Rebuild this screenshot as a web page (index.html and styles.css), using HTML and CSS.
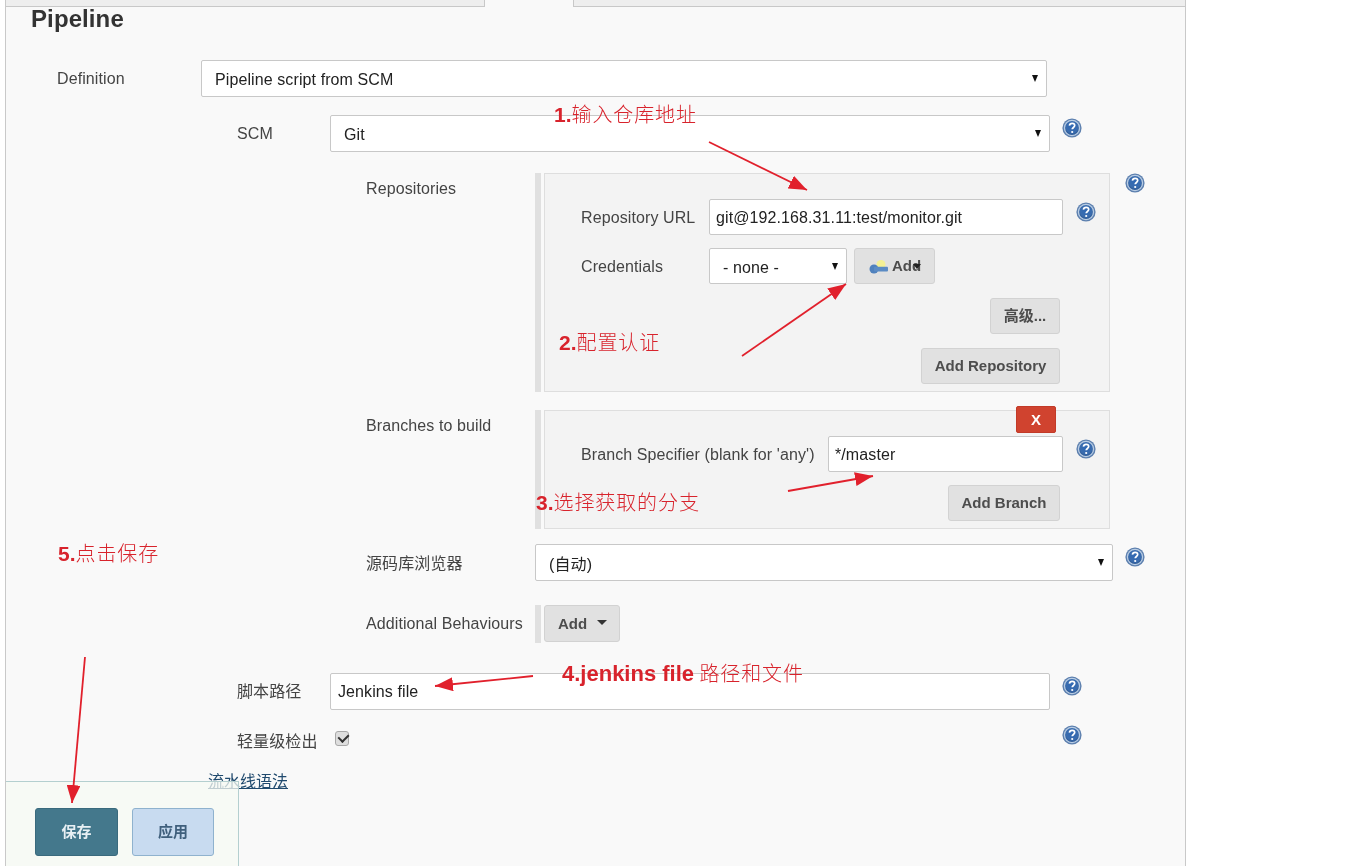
FILE: index.html
```html
<!DOCTYPE html>
<html lang="zh">
<head>
<meta charset="utf-8">
<title>Pipeline</title>
<link rel="stylesheet" href="styles.css">
</head>
<body>
<svg class="defs" width="0" height="0" aria-hidden="true">
  <defs>
    <radialGradient id="helpfill" cx="50%" cy="42%" r="60%">
      <stop offset="0" stop-color="#2f68b4"/>
      <stop offset="0.7" stop-color="#3a6cae"/>
      <stop offset="1" stop-color="#2a5590"/>
    </radialGradient>
    <symbol id="help" viewBox="0 0 20 20">
      <circle cx="10" cy="10" r="9.6" fill="#5c7fae"/>
      <circle cx="10" cy="10" r="8.2" fill="#b9cde4"/>
      <circle cx="10" cy="10" r="6.9" fill="url(#helpfill)"/>
      <path d="M7.4 7.7c.2-1.6 1.3-2.4 2.7-2.4 1.5 0 2.6.9 2.6 2.2 0 1.9-2.5 2-2.5 3.8" fill="none" stroke="#fff" stroke-width="1.7"/>
      <circle cx="10.2" cy="14" r="1.1" fill="#fff"/>
    </symbol>
    <marker id="head" viewBox="0 0 18 14" refX="18" refY="7" markerUnits="userSpaceOnUse" markerWidth="18" markerHeight="14" orient="auto">
      <path d="M0 0L18 7L0 14Z" fill="#e1202c"/>
    </marker>
  </defs>
</svg>

<div class="panel">
  <div class="tabs">
    <div class="tab tab-left"></div>
    <div class="tab-active"></div>
    <div class="tab tab-right"></div>
  </div>
  <h2 class="title">Pipeline</h2>

  <div class="row level0 row-def">
    <label class="label w-def">Definition</label>
    <div class="sel w-846"><select class="control"><option>Pipeline script from SCM</option></select></div>
  </div>

  <div class="row level1 row-scm">
    <label class="label w-l1">SCM</label>
    <div class="sel w-720"><select class="control"><option>Git</option></select></div>
    <svg class="help help-12"><use href="#help"/></svg>
  </div>

  <div class="row level2 row-repos">
    <label class="label label-block w-l2">Repositories</label>
    <div class="bar"></div>
    <div class="box box-repo">
      <div class="row">
        <label class="label w-url">Repository URL</label>
        <input class="control w-354" value="git@192.168.31.11:test/monitor.git">
        <svg class="help help-13"><use href="#help"/></svg>
      </div>
      <div class="row row-cred">
        <label class="label w-url">Credentials</label>
        <div class="sel w-138"><select class="control"><option>- none -</option></select></div>
        <button class="btn btn-key">
          <svg class="key" viewBox="0 0 20 14" width="20" height="14">
            <circle cx="12" cy="4.5" r="4.5" fill="#f4f095"/>
            <circle cx="5" cy="9" r="4.5" fill="#4f81bd"/>
            <rect x="5" y="6.8" width="14" height="4.6" rx="1" fill="#5b8bc4"/>
          </svg>
          <span>Add</span>
          <i class="caret caret-over"></i>
        </button>
      </div>
      <div class="actions actions-a"><button class="btn btn-adv">高级...</button></div>
      <div class="actions actions-a"><button class="btn btn-addrepo">Add Repository</button></div>
    </div>
    <svg class="help help-15 help-top"><use href="#help"/></svg>
  </div>

  <div class="row level2 row-branch">
    <label class="label label-block w-l2">Branches to build</label>
    <div class="bar"></div>
    <div class="box box-branch">
      <button class="btn-x">X</button>
      <div class="row">
        <label class="label w-spec">Branch Specifier (blank for 'any')</label>
        <input class="control w-235" value="*/master">
        <svg class="help help-13"><use href="#help"/></svg>
      </div>
      <div class="actions actions-b"><button class="btn btn-addbranch">Add Branch</button></div>
    </div>
  </div>

  <div class="row level2 row-browser">
    <label class="label label-browser w-l2">源码库浏览器</label>
    <div class="sel w-578"><select class="control control-cjk"><option>(自动)</option></select></div>
    <svg class="help help-12"><use href="#help"/></svg>
  </div>

  <div class="row level2 row-behave">
    <label class="label w-l2">Additional Behaviours</label>
    <div class="bar"></div>
    <button class="btn btn-addb">Add<i class="caret"></i></button>
  </div>

  <div class="row level1 row-script">
    <label class="label w-l1">脚本路径</label>
    <input class="control control-script w-720" value="Jenkins file">
    <svg class="help help-12"><use href="#help"/></svg>
  </div>

  <div class="row level1 row-light">
    <label class="label label-light w-l1">轻量级检出</label>
    <div class="w-720"><input class="check" type="checkbox" checked></div>
    <svg class="help help-12 help-top"><use href="#help"/></svg>
  </div>

  <a class="syntax" href="#">流水线语法</a>

  <div class="footer">
    <button class="fbtn save">保存</button>
    <button class="fbtn apply">应用</button>
  </div>
</div>

<svg class="arrows" width="1365" height="866" viewBox="0 0 1365 866" aria-hidden="true">
  <g fill="none" stroke="#e1202c" stroke-width="1.8" marker-end="url(#head)">
    <path d="M709 142L807 190"/>
    <path d="M742 356L846 284"/>
    <path d="M788 491L873 476"/>
    <path d="M533 676L435 686"/>
    <path d="M85 657L72 803"/>
  </g>
</svg>

<div class="note n1"><b>1.</b>输入仓库地址</div>
<div class="note n2"><b>2.</b>配置认证</div>
<div class="note n3"><b>3.</b>选择获取的分支</div>
<div class="note n4"><b>4.jenkins file</b> 路径和文件</div>
<div class="note n5"><b>5.</b>点击保存</div>
</body>
</html>
```
FILE: styles.css
```css
* { box-sizing: border-box; }
html, body { margin: 0; height: 866px; overflow: hidden; background: #fff; }
body {
  position: relative;
  font-family: "Liberation Sans", "Noto Sans CJK SC", sans-serif;
  font-size: 16px;
  letter-spacing: 0.1px;
  color: #333;
}
.defs { position: absolute; }

.panel {
  position: relative;
  margin-left: 5px;
  width: 1181px;
  height: 866px;
  overflow: hidden;
  background: #f9f9f9;
  border-left: 1px solid #c9c9c9;
  border-right: 1px solid #c9c9c9;
  filter: blur(0.3px);
}
.tabs { display: flex; height: 7px; }
.tab { background: #eee; border-bottom: 1px solid #c8c8c8; }
.tab-left { width: 479px; border-right: 1px solid #c8c8c8; }
.tab-active { width: 88px; }
.tab-right { flex: 1; border-left: 1px solid #c8c8c8; }

.title {
  margin: 0 0 0 25px;
  font-size: 24px;
  line-height: 24px;
  font-weight: 700;
  color: #333;
}

.row { display: flex; align-items: flex-start; }
.level0 { padding-left: 51px; }
.level1 { padding-left: 231px; }
.level2 { padding-left: 360px; }
.row-def { margin-top: 29px; }
.row-scm { margin-top: 18px; }
.row-repos { margin-top: 21px; }
.row-branch { margin-top: 18px; }
.row-browser { margin-top: 15px; }
.row-behave { margin-top: 24px; min-height: 38px; }
.row-script { margin-top: 30px; }
.row-light { margin-top: 15px; }
.row-cred { margin-top: 13px; }

.label { flex: none; line-height: 20px; margin-top: 9px; color: #444; }
.label-block { margin-top: 6px; }
.label-browser { margin-top: 10px; }
.label-light { margin-top: 7px; }
.w-def { width: 144px; }
.w-l1 { width: 93px; }
.w-l2 { width: 169px; }
.w-url { width: 128px; }
.w-spec { width: 247px; }
.w-846 { width: 846px; }
.w-720 { width: 720px; }
.w-578 { width: 578px; }
.w-354 { width: 354px; }
.w-235 { width: 235px; }
.w-138 { width: 138px; }

.control {
  display: block;
  height: 37px;
  padding: 1px 6px 0;
  font: 16px "Liberation Sans", "Noto Sans CJK SC", sans-serif;
  letter-spacing: 0.1px;
  color: #222;
  background: #fff;
  border: 1px solid #c8c8c8;
  border-radius: 2px;
  outline: none;
}
.box .control { height: 36px; }
.control-script { padding-left: 7px; }
.sel { position: relative; flex: none; }
.sel .control {
  width: 100%;
  padding: 2px 13px 0;
  appearance: none;
  -webkit-appearance: none;
}
.sel .control-cjk { padding-top: 4px; }
.sel::after {
  content: "";
  position: absolute;
  right: 9px;
  top: 15px;
  border-left: 3.5px solid transparent;
  border-right: 3.5px solid transparent;
  border-top: 7px solid #111;
}

.help { flex: none; width: 20px; height: 20px; margin-top: 3px; }
.help-top { margin-top: 0; }
.help-12 { margin-left: 12px; }
.help-13 { margin-left: 13px; }
.help-15 { margin-left: 15px; }

.bar { flex: none; width: 6px; margin-right: 3px; background: #e0e0e0; align-self: stretch; }
.box {
  position: relative;
  flex: none;
  width: 566px;
  background: #f3f3f3;
  border: 1px solid #dedede;
  padding-left: 36px;
}
.box-repo { height: 219px; padding-top: 25px; }
.box-branch { height: 119px; padding-top: 25px; }

.actions { display: flex; justify-content: flex-end; padding-right: 49px; }
.actions-a { margin-top: 14px; }
.actions-b { margin-top: 13px; }
.actions .btn { padding-bottom: 2px; }
.actions .btn-adv { padding-bottom: 4px; }

.btn {
  position: relative;
  display: flex;
  align-items: center;
  justify-content: center;
  height: 36px;
  padding: 0;
  font: 700 15px "Liberation Sans", "Noto Sans CJK SC", sans-serif;
  color: #4d4d4d;
  background: #e1e1e1;
  border: 1px solid #d2d2d2;
  border-radius: 3px;
}
.btn-key { flex: none; width: 81px; margin-left: 7px; justify-content: flex-start; padding: 0 0 2px 14px; }
.key { flex: none; margin-right: 3px; margin-top: 3px; }
.btn-adv { width: 70px; }
.btn-addrepo { width: 139px; }
.btn-addbranch { width: 112px; }
.btn-addb { width: 76px; height: 37px; justify-content: flex-start; padding-left: 13px; }
.caret {
  display: block;
  margin-left: 10px;
  margin-bottom: 3px;
  border-left: 5px solid transparent;
  border-right: 5px solid transparent;
  border-top: 5px solid #333;
}
.caret-over {
  position: absolute;
  left: 58px;
  top: 15px;
  margin: 0;
  border-left-width: 4px;
  border-right-width: 4px;
  border-top-color: #222;
}
.btn-x {
  position: absolute;
  top: -5px;
  right: 53px;
  width: 40px;
  height: 27px;
  padding: 0;
  font: 700 15px "Liberation Sans", sans-serif;
  color: #fff;
  background: #d0432f;
  border: 1px solid #c23a28;
  border-radius: 2px;
}

.check {
  position: relative;
  display: block;
  width: 14px;
  height: 15px;
  margin: 6px 0 0 5px;
  appearance: none;
  -webkit-appearance: none;
  background: #dedede;
  border: 1px solid #a8a8a8;
  border-radius: 3px;
}
.check::after {
  content: "";
  position: absolute;
  left: 3.5px;
  top: 0;
  width: 5px;
  height: 8px;
  border-right: 2px solid #333;
  border-bottom: 2px solid #333;
  transform: rotate(45deg);
}

.syntax {
  display: block;
  width: 80px;
  margin: 20px 0 0 202px;
  line-height: 20px;
  color: #204a6e;
  letter-spacing: 0;
  text-decoration: underline;
}

.footer {
  position: absolute;
  left: 0;
  bottom: 0;
  width: 233px;
  height: 85px;
  display: flex;
  align-items: flex-start;
  gap: 14px;
  padding: 26px 0 0 29px;
  background: rgba(246, 249, 243, 0.75);
  border-top: 1px solid #b4cfcf;
  border-right: 1px solid #b4cfcf;
}
.fbtn {
  height: 48px;
  padding: 0 0 3px;
  font: 700 15px "Noto Sans CJK SC", sans-serif;
  border-radius: 3px;
}
.save { width: 83px; color: #e8f0f4; background: #44788c; border: 1px solid #3a6a7d; }
.apply { width: 82px; color: #3f5f7c; background: #c8dbf0; border: 1px solid #8fb2ce; }

.arrows { position: absolute; left: 0; top: 0; pointer-events: none; }

.note {
  position: absolute;
  white-space: nowrap;
  font: 300 20px/28px "Noto Sans CJK SC", sans-serif;
  letter-spacing: 0.9px;
  color: #d8232c;
  filter: blur(0.3px);
}
.note b { font: 700 21px/28px "Liberation Sans", sans-serif; letter-spacing: 0; color: #d8232c; }
.n1 { left: 554px; top: 100px; }
.n2 { left: 559px; top: 328px; }
.n3 { left: 536px; top: 488px; }
.n4 { left: 562px; top: 659px; }
.n4 b { font-size: 22px; }
.n5 { left: 58px; top: 539px; }
```
